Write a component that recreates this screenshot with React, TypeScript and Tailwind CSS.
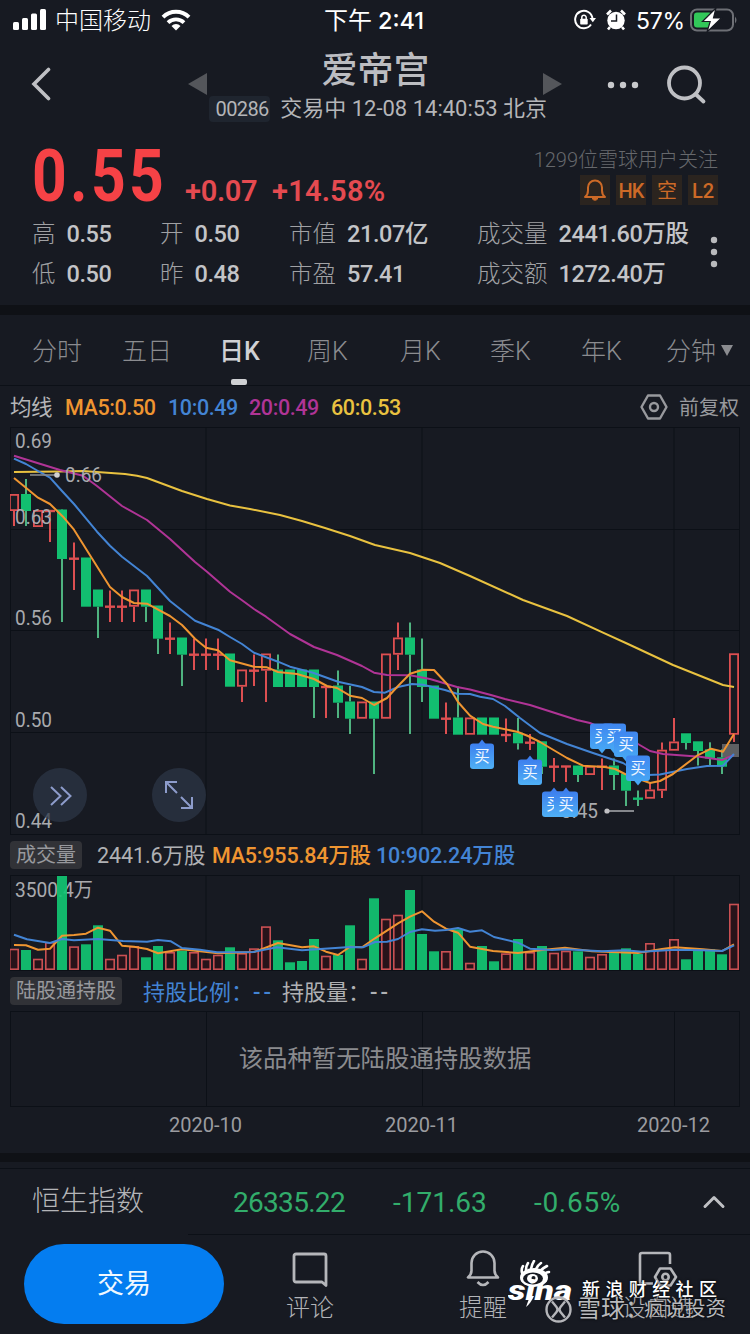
import { ChevronUp } from 'lucide-react';

type Candle = [kind: 'r' | 'g', top: number, bottom: number, high: number, low: number, volTop: number];

// one entry per trading day: body top/bottom, wick high/low, volume bar top
const candles: Candle[] = [
  ['r', 494, 511, 494, 526, 948.7],
  ['g', 494, 511, 479, 526, 950],
  ['r', 510, 527, 510, 527, 958.7],
  ['r', 511, 511, 511, 542, 942],
  ['g', 509.5, 559, 509, 622, 876],
  ['r', 558.7, 558.7, 542.5, 590, 946.3],
  ['g', 557.5, 606.7, 558, 606, 944.3],
  ['g', 589.5, 606.7, 590, 638, 925.3],
  ['r', 606.7, 606.7, 590.5, 622, 958.7],
  ['r', 606.7, 606.7, 590.5, 622, 954.7],
  ['r', 589.5, 606.7, 590, 622, 946],
  ['g', 589.5, 606.7, 590, 622, 957.3],
  ['g', 605.5, 638.7, 606, 654, 946],
  ['r', 638.7, 638.7, 622.5, 654, 952],
  ['g', 637.5, 654.7, 638, 686, 950.7],
  ['r', 654.7, 654.7, 638.5, 670, 952],
  ['r', 654.7, 654.7, 638.5, 670, 958.7],
  ['r', 654.7, 654.7, 638.5, 670, 954.7],
  ['g', 653.5, 686.7, 654, 686, 947.3],
  ['r', 669.5, 686.7, 670, 702, 953],
  ['r', 670.7, 670.7, 654.5, 686, 948.3],
  ['r', 653.5, 670.7, 654, 702, 926.3],
  ['g', 669.5, 687, 654.5, 687, 940.3],
  ['g', 669.5, 687, 670, 687, 962.3],
  ['g', 669.5, 687, 670, 687, 961],
  ['g', 669.5, 687, 670, 718, 939],
  ['r', 687, 687, 687, 718, 955.7],
  ['g', 685.5, 702.7, 670.5, 718, 955],
  ['g', 701.5, 718.7, 686, 734, 925.3],
  ['r', 701.5, 718.7, 702, 718, 958.7],
  ['g', 701.5, 718.7, 702, 774, 898.3],
  ['r', 653.5, 718.7, 654, 718, 918.7],
  ['r', 637.5, 654.7, 622.5, 670, 914.7],
  ['g', 637.5, 654.7, 622.5, 734, 890],
  ['g', 669.5, 687, 638.5, 702, 934],
  ['g', 685.5, 718.7, 686, 718, 951.3],
  ['r', 718.7, 718.7, 702.5, 734, 951],
  ['g', 717.5, 734.7, 686.7, 734, 929.3],
  ['r', 717.5, 734.7, 718, 734, 962.7],
  ['g', 717.5, 734.7, 718, 734, 946],
  ['g', 717.5, 734.7, 718, 734, 961.3],
  ['r', 735, 735, 718.5, 742, 953.3],
  ['g', 732.7, 743.3, 718, 749.5, 939],
  ['r', 742.7, 742.7, 734, 750, 952],
  ['g', 741.3, 766.7, 742, 774, 946],
  ['r', 766.7, 766.7, 758, 782, 952.7],
  ['r', 766.5, 766.5, 766, 782, 950.7],
  ['g', 765.5, 775, 766, 782, 951.3],
  ['r', 766, 775, 766, 774, 956.7],
  ['r', 766.7, 766.7, 758.5, 790, 954],
  ['g', 765.5, 775, 758.5, 790, 952],
  ['g', 773.5, 790.7, 774, 806, 948.3],
  ['g', 798.7, 798.7, 790.5, 806, 954],
  ['r', 789.5, 798.7, 782.7, 798, 943],
  ['r', 749.7, 790.7, 742.5, 798, 949.3],
  ['r', 741.5, 750.7, 718, 750, 939],
  ['g', 733.3, 743, 734, 749.5, 959.3],
  ['g', 741.3, 751, 742, 765.5, 949.3],
  ['g', 749.3, 758.5, 742.3, 765.5, 949.3],
  ['g', 757.3, 766.7, 749.3, 774, 954.3],
  ['r', 653.3, 734.7, 654, 742, 903.7],
];

const ma5 =
  '14,478 25,487 38,497.7 50,504 63,516.7 74,529.7 98,568 110,587 122,597 134,603 147,603.7 170,616 182,625 195,638.7 206,647.7 218,650.3 230,660.3 254,666.7 267,667.3 278,672 297,674 314,679 327,686 337,688 350,695.7 362,698 374,705 387,698 398,686 410,673.7 423,669.7 434,670 447,684 458,702 470,715.7 483,724 493,726.7 518,732 528,736 540,742 567,758 583,765.7 605,767 615,769 625,774 650,783 660,781 673,774 697,755.7 711,748.7 723,751.7 734,734';
const ma10 =
  '14,458.7 26,464 38,471 50,477.7 62,491 74,504 97,531.7 110,545.7 122,556.7 147,576 170,601 195,620.7 218,629.7 230,637 242,644 254,652.7 278,661.7 290,666.7 313,672.7 338,681.7 362,687 374,692 385,692.7 398,687 412,684 423,684.7 445,690 457,693.7 470,694 480,696.7 493,699 505,706 520,718 540,733 567,744 593,753 623,763 639,773 648,775 660,774.5 687,769 707,766 723,765.7 734,754';
const ma20 =
  '14,455.7 60,470 83,475.7 97,486 122,506 147,520 170,539 195,562 207,571.7 230,591.7 241.7,600 254,609 266,616.7 290,634 314,647 337,655 362,666 374,672.7 387,675 410,675.3 430,679 457,687 470,689.5 490,694.7 505,699 530,705 577,720 590,723 614,734 638,744 650,751 663,754 700,756.7 722,760 734,755';
const ma60 =
  '14,472 60,471.5 83,471 125,474 137,475.7 147,478 182,491 207,499 230,505.5 250,509 280,515 302,521 325,528 350,536 375,545 410,553 440,563 470,576 523,600 567,616 603,632.7 628,644 673,665 723,685 734,687';
const vol5 =
  '14,945 26,945.3 38,949.7 50,948.7 62,935.7 74,935 86,933.7 98,927.7 110,930.7 122,945.7 134,946.7 147,949 158,953.3 182,949.3 218,953.3 254,952 278,943 302,947.3 314,946.3 326,951.7 338,955 350,946.7 362,947.3 375,938.3 398,923.3 410,916.7 422,911.3 434,921.7 446,928.7 458,932.7 470,946.7 493,951 518,953 542,950 565,947.7 592,951.3 638,953 662,949 675,947.3 703,949.3 722,951 734,944.3';
const vol10 =
  '14,934.7 27,939.3 50,943 62,939 74,940.3 98,939 123,941 147,941.7 158,940 171,941.3 182,948 200,949.7 217,952.3 253,952 277,947.3 302,950.3 350,947 363,947.3 375,942 387,941.7 398,939 410,932 422,929.3 435,930.7 446,930 458,928 470,931.7 482,930.3 494,937 518,942.7 530,948.7 552,950 565,949.3 602,951.3 625,950.3 642,951.7 675,949.7 703,950.3 722,951 734,945.3';

const RED = '#dd4f51';
const GREEN = '#12bf70';
const GRID = '#0c1017';
const LABEL = '#a9aaae';

const months = [206, 422, 674];

const stats = [
  [
    ['高', '0.55'],
    ['低', '0.50'],
  ],
  [
    ['开', '0.50'],
    ['昨', '0.48'],
  ],
  [
    ['市值', '21.07亿'],
    ['市盈', '57.41'],
  ],
  [
    ['成交量', '2441.60万股'],
    ['成交额', '1272.40万'],
  ],
];
const statWidths = ['w-32', 'w-[129px]', 'w-[188px]', 'w-[222px]'];

const tabs = [
  { label: '分时', width: 'w-[90px]' },
  { label: '五日', width: 'w-[97px]' },
  { label: '日K', width: 'w-[88px]', active: true },
  { label: '周K', width: 'w-[93px]' },
  { label: '月K', width: 'w-[90px]' },
  { label: '季K', width: 'w-[91px]' },
  { label: '年K', width: 'w-[86px]' },
];

// buy markers: left, top, arrow direction
const markers: [number, number, 'up' | 'down'][] = [
  [470, 743.5, 'up'],
  [518, 759.5, 'up'],
  [542, 791.5, 'up'],
  [554, 791.5, 'up'],
  [590, 723.5, 'down'],
  [602, 723.5, 'down'],
  [614, 731.5, 'down'],
  [626, 755.5, 'down'],
];

function Label({ x, y, width, children }: { x: number; y: number; width: number; children: string }) {
  return (
    <text x={x} y={y} textLength={width} lengthAdjust="spacingAndGlyphs" fontSize="20" fill={LABEL}>
      {children}
    </text>
  );
}

function CandleShape({ index, candle }: { index: number; candle: Candle }) {
  const [kind, top, bottom, high, low] = candle;
  const x = 14 + index * 12;
  const color = kind === 'r' ? RED : GREEN;
  const wick = kind === 'r' ? RED : '#4fb380';
  if (top === bottom) {
    return (
      <g>
        <rect x={x - 1} y={high} width="2" height={low - high} fill={wick} />
        <rect x={x - 5} y={top - 1.2} width="10" height="2.4" fill={color} />
      </g>
    );
  }
  return (
    <g>
      {high < top && <rect x={x - 1} y={high} width="2" height={top - high} fill={wick} />}
      {low > bottom && <rect x={x - 1} y={bottom} width="2" height={low - bottom} fill={wick} />}
      {kind === 'g' ? (
        <rect x={x - 5} y={top} width="10" height={bottom - top} fill={color} />
      ) : (
        <rect x={x - 4.1} y={top + 0.9} width="8.2" height={bottom - top - 1.8} fill="none" stroke={color} strokeWidth="1.8" />
      )}
    </g>
  );
}

function Line({ points, color }: { points: string; color: string }) {
  return <polyline points={points} fill="none" stroke={color} strokeWidth="2" strokeLinejoin="round" />;
}

function PriceChart() {
  return (
    <svg className="block" width="730" height="408" viewBox="10 427 730 408">
      <defs>
        <linearGradient id="buyUp" x1="0" y1="0" x2="0" y2="1">
          <stop offset="0" stopColor="#3d7fee" />
          <stop offset="1" stopColor="#4fb0f5" />
        </linearGradient>
        <linearGradient id="buyDown" x1="0" y1="0" x2="0" y2="1">
          <stop offset="0" stopColor="#3f86f0" />
          <stop offset="1" stopColor="#47a6f4" />
        </linearGradient>
      </defs>
      <rect x="10.5" y="427.5" width="729" height="407" fill="none" stroke={GRID} />
      {[529.5, 630.5, 732.5].map(y => (
        <path key={y} d={`M10 ${y}H740`} stroke={GRID} />
      ))}
      {months.map(x => (
        <path key={x} d={`M${x} 427V835`} stroke={GRID} />
      ))}
      {candles.map((candle, i) => (
        <CandleShape key={i} index={i} candle={candle} />
      ))}
      <rect x="722" y="744" width="17" height="13" fill="#77787a" opacity="0.75" />
      <Line points={ma60} color="#e9c240" />
      <Line points={ma20} color="#b03496" />
      <Line points={ma10} color="#4384d4" />
      <Line points={ma5} color="#ef9531" />
      <Label x={15} y={448} width={37}>0.69</Label>
      <Label x={15} y={524} width={37}>0.63</Label>
      <Label x={15} y={625} width={37}>0.56</Label>
      <Label x={15} y={726.5} width={37}>0.50</Label>
      <Label x={15} y={828} width={37}>0.44</Label>
      <path d="M30 475H57" stroke="#8a8b8d" strokeWidth="1.6" />
      <circle cx="57" cy="475" r="2.8" fill="#d0d0d2" />
      <Label x={65} y={482} width={37}>0.66</Label>
      <Label x={561} y={818} width={37}>0.45</Label>
      <path d="M607 811H634" stroke="#a3a4a8" strokeWidth="1.6" />
      <circle cx="607" cy="811" r="2.6" fill="#c0c0c3" />
      {markers.map(([x, y, dir]) => (
        <g key={x} fill={dir === 'up' ? 'url(#buyUp)' : 'url(#buyDown)'}>
          <path d={dir === 'up' ? `M${x + 8} ${y + 1}l4 -5l4 5z` : `M${x + 8} ${y + 25}l4 5l4 -5z`} fill={dir === 'up' ? '#3d7fee' : '#47a6f4'} />
          <rect x={x} y={y} width="24" height="25.5" rx="3" />
          <text x={x + 12} y={y + 18.5} fontSize="15.500" textAnchor="middle" fill="#eef6ff">
            买
          </text>
        </g>
      ))}
    </svg>
  );
}

function VolumeChart() {
  return (
    <svg className="block" width="730" height="96" viewBox="10 875 730 96">
      <rect x="10.5" y="875.5" width="729" height="95" fill="none" stroke={GRID} />
      {months.map(x => (
        <path key={x} d={`M${x} 875V970`} stroke={GRID} />
      ))}
      <Label x={15} y={897} width={78}>3500.4万</Label>
      {candles.map(([kind, , , , , top], i) => {
        const x = 14 + i * 12;
        return kind === 'g' ? (
          <rect key={i} x={x - 5} y={top} width="10" height={970 - top} fill="#12c573" opacity="0.92" />
        ) : (
          <rect key={i} x={x - 4.2} y={top + 0.8} width="8.4" height={968.4 - top} fill="#27131a" stroke="#c95053" strokeWidth="1.6" />
        );
      })}
      <Line points={vol5} color="#ef9531" />
      <Line points={vol10} color="#4384d4" />
    </svg>
  );
}

function StatusBar() {
  return (
    <div className="flex h-10 items-center text-2xl leading-none text-white">
      <svg className="ml-[13px]" width="33" height="22" viewBox="0 0 33 22" fill="#fff">
        <rect x="0" y="13" width="6" height="8" rx="1.5" />
        <rect x="9" y="9" width="6" height="12" rx="1.5" />
        <rect x="18" y="4.5" width="6" height="16.5" rx="1.5" />
        <rect x="27" y="0" width="6" height="21" rx="1.5" />
      </svg>
      <span className="mt-0.5 ml-[9px] w-[97px] font-light">中国移动</span>
      <svg className="ml-[9px]" width="30" height="22" viewBox="0 0 30 22" fill="none" stroke="#fff">
        <path d="M2 8.2a18.5 18.5 0 0 1 26 0" strokeWidth="4" />
        <path d="M7 13.6a11.5 11.5 0 0 1 16 0" strokeWidth="3.8" />
        <path d="M15 21.5l-4.5-4.600a6.5 6.5 0 0 1 9 0z" fill="#fff" stroke="none" />
      </svg>
      <span className="mt-0.5 ml-[133px] w-[105px] whitespace-nowrap">
        下午 <span className="font-[Inter] text-[23.5px] font-medium">2:41</span>
      </span>
      <svg className="ml-[145px]" width="22" height="22" viewBox="0 0 22 22" fill="none" stroke="#fff" strokeWidth="2">
        <path d="M18.5 9.5A8.7 8.7 0 1 0 17 15.5" />
        <path d="M15.5 9h6.5l-3.2 4.2z" fill="#fff" stroke="none" />
        <rect x="6.2" y="9.8" width="7.5" height="5.8" rx="0.8" fill="#fff" stroke="none" />
        <path d="M7.8 10V8.5a2.2 2.2 0 0 1 4.4 0V10" strokeWidth="1.5" />
      </svg>
      <svg className="ml-2.5" width="20" height="22" viewBox="0 0 20 22">
        <circle cx="10" cy="11.5" r="8.7" fill="#fff" />
        <path d="M1 5.5l4-4M19 5.5l-4-4M4 18l-2 2.5M16 18l2 2.5" stroke="#fff" strokeWidth="2.6" />
        <path d="M10.5 5.5V12H5" stroke="#171a22" strokeWidth="1.5" fill="none" />
      </svg>
      <span className="mt-0.5 ml-2.5 w-[50px] font-[Inter] text-[23px] tracking-[-0.2px]">57%</span>
      <svg className="ml-1" width="48" height="26" viewBox="0 0 48 26">
        <rect x="1" y="2.5" width="42" height="21" rx="6" fill="none" stroke="#6d6f75" strokeWidth="2" />
        <path d="M45 9.5q3 3.5 0 7z" fill="#6d6f75" />
        <rect x="4" y="5.5" width="18" height="15" rx="3" fill="#32c759" />
        <path d="M26 1L12.5 14.5h7.700L17 25l14.5-14h-8z" fill="#fff" stroke="#171a22" strokeWidth="1.2" />
      </svg>
    </div>
  );
}

function NavBar() {
  return (
    <div className="flex h-[98px] text-[#b4b5b8]">
      <svg className="mt-[27px] ml-[31px]" width="20" height="34" viewBox="0 0 20 34" fill="none" stroke="#bfc0c4" strokeWidth="3.6" strokeLinecap="round">
        <path d="M17.5 2.5L3 17l14.5 14.5" />
      </svg>
      <svg className="mt-[33px] ml-[137px]" width="19" height="22" viewBox="0 0 19 22" fill="#54565b">
        <path d="M0 11L19 0v22z" />
      </svg>
      <div className="ml-0.5 w-[338px]">
        <div className="mt-2 pr-[5px] text-center text-[36px] leading-[46px] font-medium text-[#bcbdc1]">爱帝宫</div>
        <div className="flex items-center whitespace-nowrap">
          <span className="h-[26px] w-[63px] rounded-sm bg-[#1f252f] pl-[5px] text-center text-xl leading-[27px] tracking-[-0.6px]">00286</span>
          <span className="ml-2.5 text-[22px] leading-[30px]">交易中 12-08 14:40:53 北京</span>
        </div>
      </div>
      <svg className="mt-[33px] -ml-1" width="19" height="22" viewBox="0 0 19 22" fill="#54565b">
        <path d="M19 11L0 0v22z" />
      </svg>
      <svg className="mt-[41px] ml-[45px]" width="32" height="8" viewBox="0 0 32 8" fill="#c8c9cc">
        <circle cx="4" cy="4" r="3.2" />
        <circle cx="16" cy="4" r="3.2" />
        <circle cx="28" cy="4" r="3.2" />
      </svg>
      <svg className="mt-[24px] ml-[27px]" width="42" height="42" viewBox="0 0 42 42" fill="none" stroke="#bfc0c4" strokeWidth="3.8">
        <circle cx="18.5" cy="19" r="15.5" />
        <path d="M30 30.5l7.500 7" strokeLinecap="round" />
      </svg>
    </div>
  );
}

function Quote() {
  return (
    <div className="h-[167px] pl-8">
      <div className="flex h-[76px]">
        <span className="w-[153px] origin-left scale-x-[0.83] text-[73px] leading-[76px] font-bold tracking-[4px] whitespace-nowrap text-[#f64246]">0.55</span>
        <span className="mt-[35px] w-[87px] text-[29px] leading-[36px] font-semibold tracking-[-0.3px] text-[#e54a50]">+0.07</span>
        <span className="mt-[35px] w-[116px] text-[29px] leading-[36px] font-semibold tracking-[0.2px] text-[#e54a50]">+14.58%</span>
        <div className="flex flex-1 flex-col items-end pr-8">
          <div className="mt-[10px] text-[20px] leading-6 font-light whitespace-nowrap text-[#66686c]">1299位雪球用户关注</div>
          <div className="mt-[3px] flex gap-1.5 text-[20px] leading-[32px] font-medium text-[#cd6a27]">
            <span className="flex h-[30px] w-[30px] items-center justify-center bg-[#2b241f]">
              <svg width="22" height="24" viewBox="0 0 22 24" fill="none" stroke="#cd6a27" strokeWidth="2">
                <path d="M1 19h20c-2.5-1.8-3-3.5-3-6.5V9.5a7 7 0 0 0-14 0v3c0 3-.5 4.700-3 6.5z" strokeLinejoin="round" />
                <path d="M8 20.5h6q-3 3.5-6 0z" fill="#cd6a27" strokeWidth="1" />
              </svg>
            </span>
            <span className="h-[30px] w-[30px] bg-[#2b241f] text-center tracking-[-1px]">HK</span>
            <span className="h-[30px] w-[30px] bg-[#2b241f] text-center font-normal">空</span>
            <span className="h-[30px] w-[30px] bg-[#2b241f] text-center">L2</span>
          </div>
        </div>
      </div>
      <div className="flex">
        {stats.map((column, i) => (
          <div key={i} className={statWidths[i]}>
            {column.map(([label, value]) => (
              <div key={label} className="flex h-10 items-center text-[23.5px] leading-10 whitespace-nowrap">
                <span className="font-light text-[#a0a1a4]">{label}</span>
                <span className="ml-[11px] font-medium tracking-[-0.4px] text-[#c3c4c7]">{value}</span>
              </div>
            ))}
          </div>
        ))}
        <svg className="mt-[22px] ml-[11px]" width="8" height="32" viewBox="0 0 8 32" fill="#b9babd">
          <circle cx="4" cy="4" r="3.2" />
          <circle cx="4" cy="16" r="3.2" />
          <circle cx="4" cy="28" r="3.2" />
        </svg>
      </div>
    </div>
  );
}

function HexIcon() {
  return (
    <svg width="28" height="28" viewBox="0 0 28 28" fill="none" stroke="#98999d" strokeWidth="2.4">
      <path d="M8 2.5h12L26.5 14 20 25.5H8L1.5 14z" strokeLinejoin="round" />
      <circle cx="14" cy="14" r="4" />
    </svg>
  );
}

function SinaLogo() {
  return (
    <svg width="68" height="50" viewBox="0 0 68 50">
      <g fill="none" stroke="#fff" strokeWidth="2.6" strokeLinecap="round">
        <path d="M14 13q-1-4 1-7M18 10q0-4 2-7M23 9q1-5 3-8M28 9q2-4 5-6M32 11q3-3 7-5M36 14q3-2 5-2" />
      </g>
      <ellipse cx="26" cy="17.5" rx="14" ry="9.5" fill="#fff" />
      <ellipse cx="25" cy="18.5" rx="10" ry="6" fill="#171a22" />
      <ellipse cx="24.5" cy="18.5" rx="5.5" ry="4.6" fill="#fff" />
      <circle cx="25.5" cy="18" r="2" fill="#171a22" />
      <text x="0" y="40" fontSize="27" fontWeight="900" fontStyle="italic" fill="#fff" textLength="64" lengthAdjust="spacingAndGlyphs">
        sina
      </text>
      <path d="M22 36l-4 11q5-4 8-11z" fill="#fff" />
    </svg>
  );
}

function BottomBar() {
  return (
    <div className="relative flex h-[100px] text-[24px] leading-7 font-light text-[#b3b4b8]">
      <div className="absolute top-0 right-0 left-[188px] h-px bg-[#0c1017]" />
      <button className="mt-2.5 ml-6 h-20 w-[200px] rounded-full bg-[#047df0] text-[27px] font-normal text-[#f0f8ff]">交易</button>
      <div className="ml-[36px] flex w-[100px] flex-col items-center">
        <svg className="mt-[18px]" width="38" height="36" viewBox="0 0 38 36" fill="none" stroke="#b5b6ba" strokeWidth="2.8" strokeLinejoin="round">
          <path d="M5 2h28a2 2 0 0 1 2 2v29.5l-4-3.5H5a2 2 0 0 1-2-2V4a2 2 0 0 1 2-2z" />
        </svg>
        <span className="mt-[6px]">评论</span>
      </div>
      <div className="ml-[73px] flex w-[100px] flex-col items-center">
        <svg className="mt-[15px]" width="34" height="39" viewBox="0 0 34 39" fill="none" stroke="#b5b6ba" strokeWidth="2.6" strokeLinejoin="round">
          <path d="M2 28.5h30c-2.2-2-3.5-3.5-3.5-7v-7.5a11.5 11.5 0 0 0-23 0v7.5c0 3.5-1.3 5-3.5 7z" />
          <path d="M11.5 33q5.5 6 11 0" />
        </svg>
        <span className="mt-[6px]">提醒</span>
      </div>
      <div className="ml-[75px] flex w-[100px] flex-col items-center">
        <svg className="mt-[17px]" width="40" height="36" viewBox="0 0 40 36" fill="none" stroke="#b5b6ba" strokeWidth="2.6" strokeLinejoin="round">
          <path d="M15 32.5H4a2 2 0 0 1-2-2V4a2 2 0 0 1 2-2h26a2 2 0 0 1 2 2v9" />
          <path d="M22 17.5h10.500l5.500 8.500-5.500 8.500H22L17 26z" />
          <circle cx="27.5" cy="26" r="3.2" />
        </svg>
        <span className="mt-[7px]">设自选</span>
      </div>
      <div className="absolute top-[26px] left-[508px]">
        <SinaLogo />
      </div>
      <div className="absolute top-[43px] left-[582px] text-[18px] leading-[26px] font-medium tracking-[5.4px] whitespace-nowrap text-white [text-shadow:0_0_3px_#000]">
        新浪财经社区
      </div>
      <div className="absolute top-[61px] left-[545px] flex items-center text-[23px] leading-7 font-normal whitespace-nowrap text-[#b9babd] [text-shadow:0_0_3px_#000]">
        <svg width="27" height="27" viewBox="0 0 27 27" fill="none" stroke="#b5b6ba" strokeWidth="2.4">
          <circle cx="13.5" cy="13.5" r="12" />
          <path d="M7 5.5l4.5 5.5q2 2.5 0 5L7 21.5M20 5.5L15.5 11q-2 2.500 0 5l4.500 5.500" />
        </svg>
        <span className="ml-[5px] w-[67px] text-[24px]">雪球：</span>
        <span className="text-[20.5px]">疯说投资</span>
      </div>
    </div>
  );
}

export default function App() {
  return (
    <div className="h-[1334px] w-[750px] overflow-hidden bg-[#171a22] font-[Roboto,'Noto_Sans_CJK_SC',sans-serif]">
      <StatusBar />
      <NavBar />
      <Quote />
      <div className="h-2.5 bg-[#0f1116]" />

      <div className="flex h-[71px] border-b border-[#0c1017] pl-8 text-[25px] leading-[74px] font-light text-[#8b8c90]">
        {tabs.map(tab => (
          <div key={tab.label} className={tab.width}>
            {tab.active ? (
              <div className="relative w-[42px] font-medium text-[#d0d1d4]">
                {tab.label}
                <div className="absolute bottom-1 left-3 h-1.5 w-4 rounded-[2px] bg-[#cfd0d3]" />
              </div>
            ) : (
              tab.label
            )}
          </div>
        ))}
        <div className="-ml-px flex h-[74px] items-center">
          分钟
          <svg className="-mt-1 ml-[5px]" width="12" height="11" viewBox="0 0 12 11" fill="#8b8c90">
            <path d="M0 0h12L6 11z" />
          </svg>
        </div>
      </div>

      <div className="flex h-[41px] items-center pl-2.5 text-[21.5px] font-medium tracking-[-0.4px] whitespace-nowrap">
        <span className="mt-1 w-[55px] font-normal text-[#b4b5b8]">均线</span>
        <span className="mt-1 w-[103px] text-[#ef9531]">MA5:0.50</span>
        <span className="mt-1 w-[81px] text-[#4384d4]">10:0.49</span>
        <span className="mt-1 w-[82px] text-[#b03496]">20:0.49</span>
        <span className="mt-1 w-[309px] text-[#e9c240]">60:0.53</span>
        <HexIcon />
        <span className="mt-0.5 ml-[11px] text-[20px] font-normal tracking-normal text-[#98999d]">前复权</span>
      </div>

      <div className="relative px-2.5">
        <PriceChart />
        <div className="absolute top-[341px] left-[33px] flex h-[54px] w-[54px] items-center justify-center rounded-full bg-[#2c3545]/75">
          <svg className="mt-0.5 ml-0.5" width="22" height="20" viewBox="0 0 22 20" fill="none" stroke="#8d9ccb" strokeWidth="2">
            <path d="M1 1l9.5 9L1 19M11 1l9.5 9L11 19" />
          </svg>
        </div>
        <div className="absolute top-[341px] left-[152px] flex h-[54px] w-[54px] items-center justify-center rounded-full bg-[#2c3545]/75">
          <svg width="30" height="30" viewBox="0 0 30 30" fill="none" stroke="#8d9ccb" strokeWidth="2">
            <path d="M2 13V2h11M2 2l11 11M17 28h11V17M28 28L17 17" />
          </svg>
        </div>
      </div>

      <div className="flex h-10 items-center pl-2.5 text-[21.5px] tracking-[-0.1px] whitespace-nowrap">
        <span className="h-7 w-[72px] rounded bg-[#313237] text-center text-[20px] leading-[29px] tracking-normal text-[#98999d]">成交量</span>
        <span className="mt-[3px] ml-[15px] w-[115px] text-[#b0b1b4]">2441.6万股</span>
        <span className="mt-[3px] w-[164px] font-medium tracking-[-0.2px] text-[#ef9531]">MA5:955.84万股</span>
        <span className="mt-[3px] font-medium text-[#4384d4]">10:902.24万股</span>
      </div>
      <div className="px-2.5">
        <VolumeChart />
      </div>

      <div className="flex h-10 items-center pl-2.5 text-[22px] whitespace-nowrap">
        <span className="h-7 w-28 rounded bg-[#313237] text-center text-[20px] leading-[29px] text-[#98999d]">陆股通持股</span>
        <span className="mt-0.5 ml-[21px] w-[139px] text-[#4384d4]">
          持股比例：<span className="font-medium tracking-[3px]">--</span>
        </span>
        <span className="mt-0.5 text-[#b0b1b4]">
          持股量：<span className="font-medium tracking-[3px]">--</span>
        </span>
      </div>
      <div className="relative mx-2.5 flex h-24 items-center justify-center border border-[#0c1017] text-[24.4px] text-[#8a8b8f]">
        <div className="absolute inset-y-0 left-[195px] w-px bg-[#0c1017]" />
        <div className="absolute inset-y-0 left-[411px] w-px bg-[#0c1017]" />
        <div className="absolute inset-y-0 left-[663px] w-px bg-[#0c1017]" />
        <span className="relative -mr-5">该品种暂无陆股通持股数据</span>
      </div>
      <div className="flex h-[46px] pt-[3px] pl-[169px] text-[20px] leading-[30px] text-[#9b9ca0]">
        <span className="w-[216px]">2020-10</span>
        <span className="w-[252px]">2020-11</span>
        <span>2020-12</span>
      </div>

      <div className="h-[9px] bg-[#0f1116]" />
      <div className="mt-1.5 flex h-[66px] items-center border-t border-[#0c1017] pl-8 text-[28px] text-[#32ad6b]">
        <span className="w-[201px] font-light text-[#b4b5b8]">恒生指数</span>
        <span className="mt-0.5 w-40 tracking-[-0.7px]">26335.22</span>
        <span className="mt-0.5 w-[141px]">-171.63</span>
        <span className="mt-0.5 w-[162px] tracking-[0.7px]">-0.65%</span>
        <ChevronUp className="h-9 w-9 text-[#bfc0c4]" strokeWidth={2} />
      </div>
      <BottomBar />
    </div>
  );
}
